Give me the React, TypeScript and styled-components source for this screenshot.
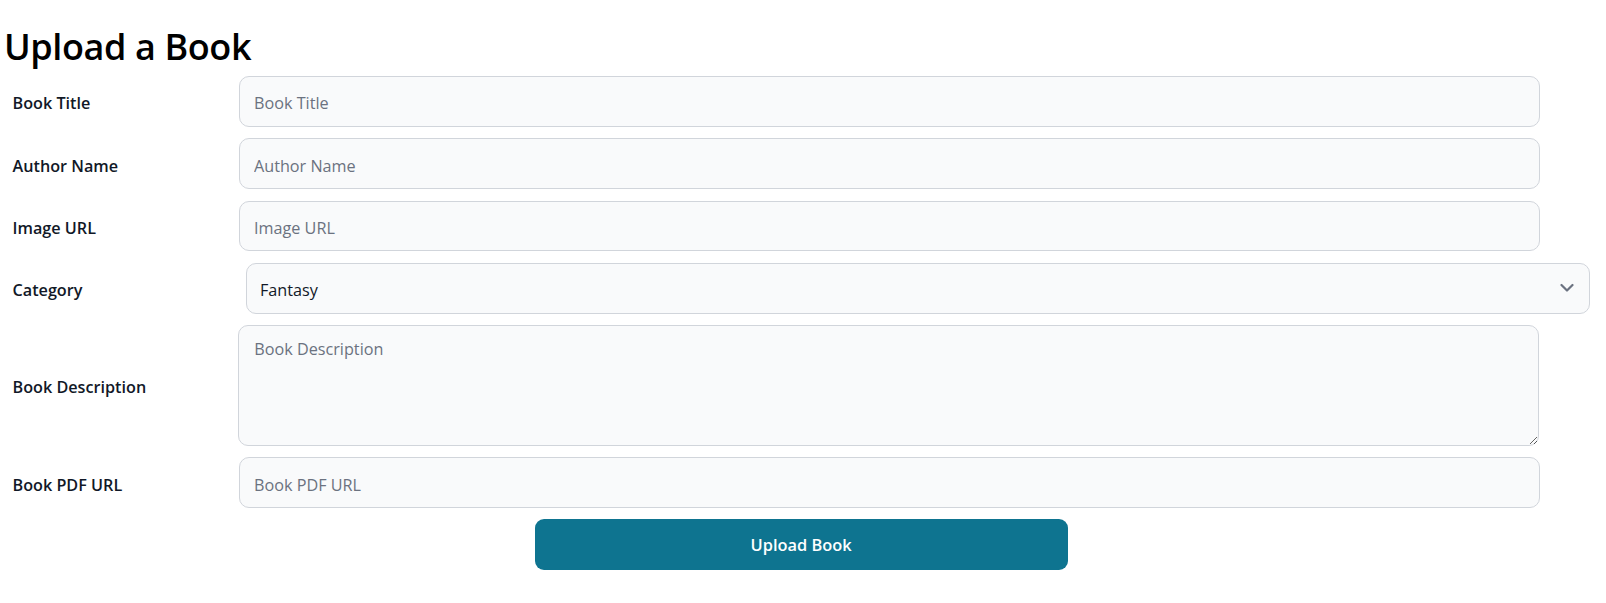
import React, { useState } from 'react';
import styled, { createGlobalStyle } from 'styled-components';

const GlobalStyle = createGlobalStyle`
  html, body {
    margin: 0;
    padding: 0;
    background: #ffffff;
  }
  body {
    font-family: 'Open Sans', 'Noto Sans', 'Liberation Sans', sans-serif;
    color: #000000;
  }
  * {
    box-sizing: border-box;
  }
`;

const Page = styled.div`
  padding: 0 4px;
`;

const Title = styled.h1`
  margin: 0;
  padding-top: 23px;
  font-size: 36px;
  font-weight: 600;
  line-height: 47px;
  letter-spacing: -0.4px;
`;

const Form = styled.form`
  display: flex;
  flex-direction: column;
  padding-top: 6px;
`;

const Row = styled.div`
  display: flex;
  align-items: center;
  margin-bottom: 11.6px;
`;

const Label = styled.label`
  flex: 0 0 235px;
  padding-left: 8.5px;
  padding-top: 4px;
  font-size: 16.2px;
  font-weight: 550;
  color: #111827;
`;

const fieldBase = `
  display: block;
  background: #f9fafb;
  border: 1px solid #d1d5db;
  border-radius: 10px;
  font-family: 'Open Sans', 'Noto Sans', 'Liberation Sans', sans-serif;
  font-size: 16.2px;
  color: #111827;
  outline: none;
  &::placeholder {
    color: #6b7280;
    opacity: 1;
  }
`;

const TextInput = styled.input`
  ${fieldBase}
  width: 1300.5px;
  height: 50.7px;
  padding: 4px 14px 0;
`;

const TextArea = styled.textarea`
  ${fieldBase}
  width: 1301px;
  height: 120.7px;
  margin-left: -0.7px;
  padding: 12px 15px;
  resize: vertical;
`;

const SelectWrap = styled.div`
  position: relative;
  margin-left: 7px;
`;

const Select = styled.select`
  ${fieldBase}
  appearance: none;
  width: 1343.6px;
  height: 50.7px;
  padding: 3px 40px 0 13px;
`;

const Chevron = styled.svg`
  position: absolute;
  right: 16px;
  top: 50%;
  transform: translateY(-50%);
  pointer-events: none;
`;

const ButtonRow = styled.div`
  padding-left: 530.6px;
  margin-top: -1px;
`;

const SubmitButton = styled.button`
  width: 533px;
  height: 51.5px;
  border: none;
  border-radius: 9px;
  background: #0e7490;
  color: #ffffff;
  font-family: 'Open Sans', 'Noto Sans', 'Liberation Sans', sans-serif;
  font-size: 16.4px;
  font-weight: 600;
  padding-top: 2px;
  cursor: pointer;
`;

const categories = ['Fantasy', 'Science Fiction', 'Mystery', 'Romance', 'History', 'Biography'];

export default function App() {
  const [category, setCategory] = useState('Fantasy');

  return (
    <Page>
      <GlobalStyle />
      <Title>Upload a Book</Title>
      <Form onSubmit={(e) => e.preventDefault()}>
        <Row>
          <Label htmlFor="title">Book Title</Label>
          <TextInput id="title" placeholder="Book Title" />
        </Row>
        <Row>
          <Label htmlFor="author">Author Name</Label>
          <TextInput id="author" placeholder="Author Name" />
        </Row>
        <Row>
          <Label htmlFor="image">Image URL</Label>
          <TextInput id="image" placeholder="Image URL" />
        </Row>
        <Row>
          <Label htmlFor="category">Category</Label>
          <SelectWrap>
            <Select id="category" value={category} onChange={(e) => setCategory(e.target.value)}>
              {categories.map((c) => (
                <option key={c} value={c}>
                  {c}
                </option>
              ))}
            </Select>
            <Chevron width="14" height="9" viewBox="0 0 14 9" fill="none">
              <path d="M1.5 1.5L7 7L12.5 1.5" stroke="#6b7280" strokeWidth="2.2" strokeLinecap="round" strokeLinejoin="round" />
            </Chevron>
          </SelectWrap>
        </Row>
        <Row>
          <Label htmlFor="description">Book Description</Label>
          <TextArea id="description" placeholder="Book Description" />
        </Row>
        <Row>
          <Label htmlFor="pdf">Book PDF URL</Label>
          <TextInput id="pdf" placeholder="Book PDF URL" />
        </Row>
        <ButtonRow>
          <SubmitButton type="submit">Upload Book</SubmitButton>
        </ButtonRow>
      </Form>
    </Page>
  );
}
